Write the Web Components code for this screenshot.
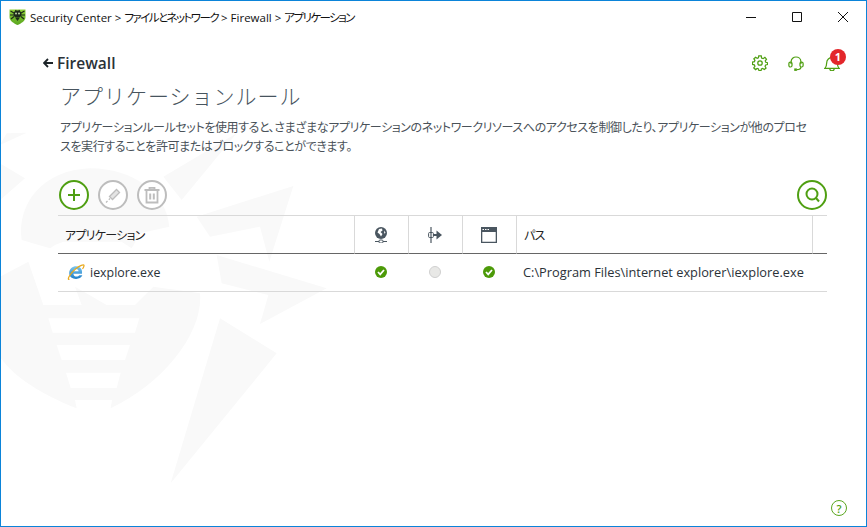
<!DOCTYPE html>
<html lang="ja">
<head>
<meta charset="utf-8">
<title>Security Center</title>
<style>
  html, body { margin: 0; height: 100%; }
  body { font-family: "Open Sans", "Noto Sans CJK JP", sans-serif; font-size: 13px; color: #2b3238; background: #fff; overflow: hidden; }
</style>
</head>
<body>
<app-window>
  <title-bar></title-bar>
  <page-head heading="Firewall" title-text="アプリケーションルール">
    アプリケーションルールセットを使用すると、さまざまなアプリケーションのネットワークリソースへのアクセスを制御したり、アプリケーションが他のプロセスを実行することを許可またはブロックすることができます。
  </page-head>
  <rule-toolbar></rule-toolbar>
  <rule-table></rule-table>
  <help-link></help-link>
</app-window>

<script>
class AppWindow extends HTMLElement {
  constructor() {
    super();
    this.attachShadow({mode:'open'});
    this.shadowRoot.innerHTML = `
      <style>
        :host {
          display: flex;
          flex-direction: column;
          box-sizing: border-box;
          width: 867px;
          height: 527px;
          border: 1px solid #0b84d9;
          position: relative;
          overflow: hidden;
        }
        svg { position: absolute; left: -1px; top: 119px; width: 340px; height: 407px; z-index: 0; }
        slot { display: contents; }
      </style>
      <svg viewBox="0 0 1020 1221" fill="#f9f9f9">
        <path d="M20 40 80 38 0 75ZM0 130 75 175 0 240Z"/>
        <path d="M65 360C50 250 130 150 270 145C400 145 500 220 508 320L420 340L395 385L365 365L190 365L165 375L150 385Z"/>
        <path fill-rule="evenodd" d="M0 470 85 425 130 555H245L225 500 320 555H405L460 500 600 520C610 640 490 790 332 865L336 840H225L230 865C120 820 40 770 0 710ZM145 595H418L405 638H158ZM170 675H390L375 720H185ZM198 758H362L350 804H212Z"/>
        <path d="M660 595 830 700 512 1090ZM650 405 980 505 780 612 805 525 665 490ZM590 290 880 198 808 425 780 320 630 350ZM490 170 710 40 545 240Z"/>
      </svg>
      <slot></slot>
    `;
  }
}

class TitleBar extends HTMLElement {
  constructor() {
    super();
    this.attachShadow({mode:'open'});
    this.shadowRoot.innerHTML = `
      <style>
        :host {
          display: flex;
          align-items: center;
          height: 31px;
          padding-left: 8px;
          font-size: 11.500px;
          color: #111;
          position: relative;
          z-index: 1;
        }
        .logo { width: 17px; height: 17px; margin-right: 4px; flex: none; }
        .crumbs { flex: 1; white-space: nowrap; }
        .ja { font-size: 11.500px; letter-spacing: -1.550px; font-feature-settings: "palt"; }
        .controls { display: flex; }
        .controls div { width: 46px; height: 31px; display: flex; align-items: center; justify-content: center; }
        .controls svg { width: 12px; height: 12px; fill: none; stroke: #111; stroke-width: 1; }
      </style>
      <svg class="logo" viewBox="0 0 17 17">
        <defs><linearGradient id="g" x1="0" y1="0" x2="0" y2="1"><stop offset="0" stop-color="#8fd13a"/><stop offset="1" stop-color="#5aa61f"/></linearGradient></defs>
        <path d="M.5 1.500H16.500V9C16.500 13 12 15.500 8.500 17C5 15.500 .5 13 .5 9Z" fill="url(#g)"/>
        <ellipse cx="8.500" cy="6" rx="4" ry="3.500" fill="#1d2a1a"/>
        <path d="M1.500 3 5 5M15.500 3 12 5M1 7H5M16 7H12M2 11 5 8.500M15 11 12 8.500M6.500 2 7.500 4M10.500 2 9.500 4" stroke="#1d2a1a" stroke-width="1.200"/>
        <path d="M6 9.500H11L8.500 13Z" fill="#1d2a1a"/>
        <circle cx="7" cy="5.500" r=".9" fill="#cfe9b4"/><circle cx="10" cy="5.500" r=".9" fill="#cfe9b4"/>
      </svg>
      <span class="crumbs">Security Center &gt; <span class="ja">ファイルとネットワーク</span> &gt; Firewall &gt; <span class="ja">アプリケーション</span></span>
      <div class="controls">
        <div><svg viewBox="0 0 12 12"><path d="M1 6.500H11"/></svg></div>
        <div><svg viewBox="0 0 12 12"><path d="M1.500 1.500H10.500V10.500H1.500Z"/></svg></div>
        <div><svg viewBox="0 0 12 12"><path d="M1 1 11 11M11 1 1 11"/></svg></div>
      </div>
    `;
  }
}

class PageHead extends HTMLElement {
  constructor() {
    super();
    this.attachShadow({mode:'open'});
    this.shadowRoot.innerHTML = `
      <style>
        :host { display: block; position: relative; z-index: 1; padding: 17px 0 0 59px; }
        .top { display: flex; align-items: center; height: 28px; margin-left: -17px; }
        .back { display: flex; align-items: center; gap: 4px; font-size: 15.500px; font-weight: 600; color: #2b3238; flex: 1; }
        .back svg { width: 10px; height: 10px; fill: none; stroke: #1c2328; stroke-width: 1.800; }
        .tools { display: flex; gap: 20px; margin-right: 26px; position: relative; }
        .tools svg { display: block; width: 16px; height: 16px; fill: none; stroke: #4f9f12; stroke-width: 1.400; }
        .badge {
          position: absolute; right: -6px; top: -6px; width: 16px; height: 16px; border-radius: 50%;
          background: #e3262b; color: #fff; font-size: 11px; font-weight: 700; line-height: 16px; text-align: center;
        }
        h1 { margin: 3px 0 0; font-size: 21px; font-weight: 300; color: #47545e; line-height: 30px; letter-spacing: 1px; font-family: "Noto Sans CJK JP", sans-serif; }
        p { margin: 7px 0 0; width: 750px; line-height: 19px; font-size: 12px; letter-spacing: -.4px; color: #4a5259; font-family: "Noto Sans CJK JP", sans-serif; font-feature-settings: "palt"; }
      </style>
      <div class="top">
        <div class="back">
          <svg viewBox="0 0 10 10"><path d="M10 5H1.500M5 1 1 5 5 9"/></svg>
          <span>${this.getAttribute('heading')}</span>
        </div>
        <div class="tools">
          <svg viewBox="0 0 18 18"><circle cx="9" cy="9" r="2.500"/><path d="M7.600 1H10.400L10.800 3.400 12.500 4.100 14.500 2.700 16.300 4.700 14.900 6.700 15.500 8.200 17.500 8.700V10.700L15.400 11.200 14.700 12.700 15.800 14.700 13.900 16.400 12 15.200 10.600 15.800 10.200 17.500H7.800L7.300 15.700 5.800 15.100 4 16.400 2 14.600 3.300 12.700 2.600 11.100 .5 10.600V8L2.700 7.500 3.300 6 2.100 4.300 4 2.600 5.800 3.700 7.200 3.100Z"/></svg>
          <svg viewBox="0 0 18 18"><path d="M3.500 10V7.500C3.500 .5 14.500 .5 14.500 7.500V10"/><rect x="1" y="8" width="3.500" height="5.500" rx="1.700"/><rect x="13.500" y="8" width="3.500" height="5.500" rx="1.700"/><path d="M14.500 13.500C14.500 15.500 13 16.500 10 16.500"/><path d="M7 16.500H10" stroke-width="2.800"/></svg>
          <svg viewBox="0 0 18 18"><path d="M1 15H17C15 13 15 11 15 9C15 5 12 3 9 3C6 3 3 5 3 9C3 11 3 13 1 15ZM6.500 15.500C6.500 18.500 11.500 18.500 11.500 15.500"/></svg>
          <span class="badge">1</span>
        </div>
      </div>
      <h1>${this.getAttribute('title-text')}</h1>
      <p><slot></slot></p>
    `;
  }
}

class RoundButton extends HTMLElement {
  constructor() {
    super();
    this.attachShadow({mode:'open'});
    this.shadowRoot.innerHTML = `
      <style>
        :host {
          display: flex; align-items: center; justify-content: center;
          box-sizing: border-box; width: 30px; height: 30px; border-radius: 50%;
          border: 2px solid #bdbdbd; color: #bdbdbd; background: #fff;
        }
        :host([active]) { border-color: #4f9f12; color: #4f9f12; }
      </style>
      <slot></slot>
    `;
  }
}

class RuleToolbar extends HTMLElement {
  constructor() {
    super();
    this.attachShadow({mode:'open'});
    this.shadowRoot.innerHTML = `
      <style>
        :host { display: flex; gap: 9px; position: relative; z-index: 1; margin: 25px 39px 0 58px; padding-bottom: 5px; }
        .right { margin-left: auto; }
        svg { display: block; width: 18px; height: 18px; fill: none; stroke: currentColor; stroke-width: 2; }
      </style>
      <round-button active><svg viewBox="0 0 18 18"><path d="M9 3V15M3 9H15"/></svg></round-button>
      <round-button><svg viewBox="0 0 18 18"><path d="M5.500 10.500 12.500 3.500 15.500 6.500 8.500 13.500Z" fill="#e4e4e4" stroke-width="1.300"/><path d="M2 16.500 3.500 15M4.800 13.700 6 12.500" stroke-width="1.300"/></svg></round-button>
      <round-button><svg viewBox="0 0 18 18"><path d="M1.500 4H16.500M6.500 4V1.800H11.500V4" stroke-width="1.800"/><path d="M3.500 5V16.500H14.500V5" stroke-width="1.800"/><path d="M7.200 7.500V13.500M10.800 7.500V13.500" stroke-width="2"/></svg></round-button>
      <round-button active class="right"><svg viewBox="0 0 18 18"><circle cx="9" cy="8" r="5.500"/><path d="M13 12 16 15.500"/></svg></round-button>
    `;
  }
}

class StatusDot extends HTMLElement {
  constructor() {
    super();
    this.attachShadow({mode:'open'});
    this.shadowRoot.innerHTML = `
      <style>
        :host { display: block; width: 12px; height: 12px; }
        svg { display: block; width: 12px; height: 12px; }
      </style>
      ${this.hasAttribute('on')
        ? `<svg viewBox="0 0 12 12"><circle cx="6" cy="6" r="6" fill="#4c9a08"/><path d="M3 6 5.200 8.300 9 4" fill="none" stroke="#fff" stroke-width="1.800"/></svg>`
        : `<svg viewBox="0 0 12 12"><circle cx="6" cy="6" r="5.500" fill="#e8e8e6" stroke="#cfcfcf"/></svg>`}
    `;
  }
}

class RuleTable extends HTMLElement {
  constructor() {
    super();
    this.attachShadow({mode:'open'});
    this.shadowRoot.innerHTML = `
      <style>
        :host {
          display: grid;
          grid-template-columns: 297px 54px 54px 54px 296px 14px;
          grid-template-rows: 38px 38px;
          margin: 0 39px 0 57px;
          border-top: 1px solid #d9d9d9;
          position: relative;
          z-index: 1;
          font-size: 12.800px;
        }
        .c { display: flex; align-items: center; justify-content: center; box-sizing: border-box; }
        .h { border-bottom: 1px solid #666; border-right: 1px solid #d9d9d9; color: #222; font-family: "Noto Sans CJK JP", sans-serif; font-size: 12px; font-feature-settings: "palt"; }
        .r { border-bottom: 1px solid #d9d9d9; color: #2b3238; padding-bottom: 1px; }
        .dot, .ic { padding-right: 2px; }
        .h.ic { padding-right: 1px; }
        .l { justify-content: flex-start; padding-left: 7px; }
        .path { padding-left: 6px; grid-column: span 2; white-space: nowrap; }
        .last { border-right: 0; }
        .name { padding-left: 9px; gap: 5px; font-size: 12.400px; }
        .tight { letter-spacing: -.75px; }
        svg { display: block; }
      </style>
      <div class="c h l tight">アプリケーション</div>
      <div class="c h ic"><svg width="12" height="16" viewBox="0 0 12 16">
        <circle cx="6" cy="6" r="6" fill="#4a5660"/>
        <path d="M4 2 7 1.500 7.500 3.500 5.500 5 7.500 7 6 9.500 4.500 7 2.500 5.500ZM9.500 3.500 10.500 6 9 6.500Z" fill="#fff"/>
        <path d="M0 14.500H12" stroke="#4a5660"/><rect x="4" y="13" width="4" height="3" rx="1" fill="#fff" stroke="#4a5660"/>
      </svg></div>
      <div class="c h ic"><svg width="14" height="16" viewBox="0 0 14 16">
        <path d="M3 0V16" stroke="#4a5660" stroke-width="1.200"/>
        <rect x=".6" y="5.500" width="4.800" height="5" rx="1" fill="none" stroke="#4a5660"/>
        <path d="M5 8H9" stroke="#4a5660" stroke-width="2"/>
        <path d="M8.500 3.500 14 8 8.500 12.500Z" fill="#4a5660"/>
      </svg></div>
      <div class="c h ic"><svg width="16" height="16" viewBox="0 0 16 16">
        <path d="M0 0H16V16H0ZM1.300 5V14.700H14.700V5Z" fill="#4a5660" fill-rule="evenodd"/>
        <path d="M1.500 2.500H3M4 2.500H5.500M6.500 2.500H8" stroke="#fff"/>
      </svg></div>
      <div class="c h l tight">パス</div>
      <div class="c h last"></div>

      <div class="c r l name"><svg width="18" height="18" viewBox="0 0 18 18">
        <defs><linearGradient id="ie" x1="0" y1="0" x2="0" y2="1"><stop offset="0" stop-color="#7cc6ee"/><stop offset="1" stop-color="#1f7fc9"/></linearGradient></defs>
        <path d="M15 10.800H6.400C6.600 14.200 11 14.300 12.300 12.300H15.400C13.500 17.500 2.200 17.300 2.200 10C2.200 4 9 1.500 13 4.500C14.700 5.800 15.300 8 15 10.800ZM6.400 8.200H11.600C11.200 5.300 6.900 5.300 6.400 8.200Z" fill="url(#ie)" fill-rule="evenodd"/>
        <path d="M2.500 16C-.5 17.800 2.500 11 8.500 6C12 3 17.500 .3 17 2.800C16.800 3.800 16.300 5 15.500 6" fill="none" stroke="#e9a91c" stroke-width="1.200"/>
      </svg><span>iexplore.exe</span></div>
      <div class="c r dot"><status-dot on></status-dot></div>
      <div class="c r dot"><status-dot></status-dot></div>
      <div class="c r dot"><status-dot on></status-dot></div>
      <div class="c r l path">C:\\Program Files\\internet explorer\\iexplore.exe</div>
    `;
  }
}

class HelpLink extends HTMLElement {
  constructor() {
    super();
    this.attachShadow({mode:'open'});
    this.shadowRoot.innerHTML = `
      <style>
        :host {
          display: flex; align-items: center; justify-content: center;
          box-sizing: border-box; width: 16px; height: 16px; border-radius: 50%;
          border: 1.500px solid #5aa61f; color: #4f9f12; font-size: 11px; font-weight: 600; line-height: 1;
          margin: auto 19px 10px auto; position: relative; z-index: 1;
        }
      </style>
      ?
    `;
  }
}

customElements.define('app-window', AppWindow);
customElements.define('title-bar', TitleBar);
customElements.define('page-head', PageHead);
customElements.define('round-button', RoundButton);
customElements.define('rule-toolbar', RuleToolbar);
customElements.define('status-dot', StatusDot);
customElements.define('rule-table', RuleTable);
customElements.define('help-link', HelpLink);
</script>
</body>
</html>
